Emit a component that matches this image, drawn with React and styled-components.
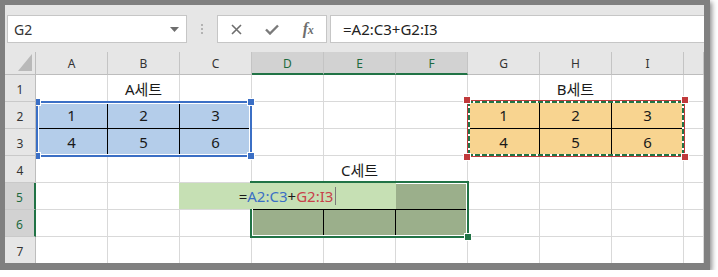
import React from "react";
import styled, { createGlobalStyle } from "styled-components";

const GlobalStyle = createGlobalStyle`
  html, body { margin: 0; padding: 0; background: #fff; }
  body { font-family: "Noto Sans", "Noto Sans CJK KR", sans-serif; }
  * { box-sizing: border-box; }
`;

const GREEN = "#217346";
const BLUE = "#3b6fc5";
const RED = "#c0393b";

const Frame = styled.div`
  width: 710px;
  height: 270px;
  padding: 5px 6px 7px 5px;
  background: #808080;
  box-shadow: 2px 2px 5px rgba(0, 0, 0, 0.45);
`;

const Window = styled.div`
  width: 699px;
  height: 258px;
  background: #fff;
  overflow: hidden;
  display: flex;
  flex-direction: column;
`;

const FormulaBar = styled.div`
  flex: 0 0 47px;
  background: #e6e6e6;
  display: flex;
  align-items: flex-start;
  padding: 10px 0 0 2px;
`;

const NameBox = styled.div`
  width: 180px;
  height: 28px;
  border: 1px solid #c6c6c6;
  background: #fff;
  display: flex;
  align-items: center;
  justify-content: space-between;
  padding: 0 7px 0 6px;
  font-size: 14px;
  color: #333;
`;

const Grip = styled.div`
  width: 30px;
  height: 28px;
  display: flex;
  flex-direction: column;
  align-items: center;
  justify-content: center;
  gap: 2px;
`;

const GripDot = styled.span`
  width: 2px;
  height: 2px;
  background: #b3b3b3;
`;

const FxBox = styled.div`
  width: 110px;
  height: 28px;
  border: 1px solid #c6c6c6;
  background: #fff;
  display: grid;
  grid-template-columns: repeat(3, 36px);
  align-items: center;
  justify-items: center;
`;

const FxText = styled.span`
  font-family: "Liberation Serif", serif;
  font-style: italic;
  font-weight: bold;
  font-size: 16px;
  line-height: 1;
  color: #6e6e6e;
  letter-spacing: -0.5px;
  & > small { font-size: 12px; }
`;

const FormulaInput = styled.div`
  flex: 1;
  margin-left: 3px;
  height: 28px;
  border: 1px solid #c6c6c6;
  border-right: none;
  background: #fff;
  display: flex;
  align-items: center;
  padding-left: 12px;
  font-size: 15px;
  color: #222;
`;

const Sheet = styled.div`
  flex: 1;
  display: grid;
  grid-template-columns: 31px 1fr;
  grid-template-rows: 23px 1fr;
  overflow: hidden;
`;

const Corner = styled.div`
  background: #e6e6e6;
  border-right: 1px solid #bdbdbd;
  border-bottom: 1px solid #bdbdbd;
  display: flex;
  align-items: flex-end;
  justify-content: flex-end;
  padding: 0 3px 3px 0;
`;

const ColHeaders = styled.div`
  display: grid;
  grid-template-columns: repeat(9, 72px) 1fr;
`;

const ColHead = styled.div`
  background: ${(p) => (p.$sel ? "#d2d2d2" : "#e6e6e6")};
  border-right: 1px solid #c4c4c4;
  border-bottom: ${(p) => (p.$sel ? `2px solid ${GREEN}` : "1px solid #bdbdbd")};
  display: flex;
  align-items: center;
  justify-content: center;
  font-size: 12px;
  color: ${(p) => (p.$sel ? "#1d6a3e" : "#333")};
  padding-top: ${(p) => (p.$sel ? "1px" : "0")};
`;

const RowHeaders = styled.div`
  display: grid;
  grid-template-rows: repeat(7, 27px);
`;

const RowHead = styled.div`
  background: ${(p) => (p.$sel ? "#d2d2d2" : "#e6e6e6")};
  border-bottom: 1px solid #c9c9c9;
  border-right: ${(p) => (p.$sel ? `2px solid ${GREEN}` : "1px solid #bdbdbd")};
  display: flex;
  align-items: center;
  justify-content: center;
  font-size: 12px;
  color: ${(p) => (p.$sel ? "#1d6a3e" : "#333")};
  padding-top: 2px;
`;

const Cells = styled.div`
  position: relative;
  overflow: hidden;
  display: grid;
  grid-template-columns: repeat(9, 72px) 1fr;
  grid-template-rows: repeat(7, 27px);
`;

const Cell = styled.div`
  background: ${(p) => p.$fill || "#fff"};
  border-right: 1px solid ${(p) => (p.$ruled ? "#000" : "#d9d9d9")};
  border-bottom: 1px solid ${(p) => (p.$ruled ? "#000" : "#d9d9d9")};
  display: flex;
  align-items: center;
  justify-content: center;
  font-size: 15px;
  color: #1a1a1a;
  white-space: nowrap;
`;

const Box = styled.div`
  position: absolute;
  left: ${(p) => p.$x}px;
  top: ${(p) => p.$y}px;
  width: ${(p) => p.$w}px;
  height: ${(p) => p.$h}px;
  pointer-events: none;
`;

const RefBox = styled(Box)`
  border: 2px solid ${BLUE};
  box-shadow: inset 0 0 0 1px #fff;
`;

const CopyBox = styled(Box)`
  border: 1px solid ${RED};
`;

const Dashes = styled.div`
  position: absolute;
  inset: 0;
  background:
    repeating-linear-gradient(90deg, ${GREEN} 0 5px, #fff 5px 7px) top left / 100% 2px no-repeat,
    repeating-linear-gradient(90deg, ${GREEN} 0 5px, #fff 5px 7px) bottom left / 100% 2px no-repeat,
    repeating-linear-gradient(180deg, ${GREEN} 0 5px, #fff 5px 7px) top left / 2px 100% no-repeat,
    repeating-linear-gradient(180deg, ${GREEN} 0 5px, #fff 5px 7px) top right / 2px 100% no-repeat;
`;

const SelBox = styled(Box)`
  border: 2px solid ${GREEN};
  box-shadow: inset 0 0 0 1px #fff;
`;

const Handle = styled.span`
  position: absolute;
  width: 6px;
  height: 6px;
  background: ${(p) => p.$color};
  box-shadow: 0 0 0 1px #fff;
  ${(p) => (p.$v === "t" ? "top: -4px;" : "bottom: -4px;")}
  ${(p) => (p.$h === "l" ? "left: -4px;" : "right: -4px;")}
`;

const EditBox = styled(Box)`
  background: #c6e0b4;
  z-index: 2;
  display: flex;
  align-items: center;
  justify-content: center;
  font-size: 15px;
  color: #1a1a1a;
  white-space: nowrap;
`;

const Ref = styled.span`
  color: ${(p) => p.$color};
`;

const Caret = styled.span`
  display: inline-block;
  width: 1px;
  height: 18px;
  background: #7a7a7a;
  margin-left: 2px;
`;

const COLS = ["A", "B", "C", "D", "E", "F", "G", "H", "I", ""];
const SEL_COLS = ["D", "E", "F"];
const BLUE_FILL = "#b4cdea";
const ORANGE_FILL = "#f8d490";
const DARK_FILL = "#9baf8b";

function buildRows() {
  const rows = Array.from({ length: 7 }, () => COLS.map(() => ({ text: "" })));
  rows[0][1].text = "A세트";
  rows[0][7].text = "B세트";
  rows[3][4].text = "C세트";
  [[1, 2, 3], [4, 5, 6]].forEach((vals, r) => {
    vals.forEach((v, c) => {
      rows[1 + r][c] = { text: String(v), fill: BLUE_FILL, ruled: true };
      rows[1 + r][6 + c] = { text: String(v), fill: ORANGE_FILL, ruled: true };
    });
  });
  [4, 5].forEach((r) => {
    [3, 4, 5].forEach((c) => {
      rows[r][c] = { text: "", fill: DARK_FILL, ruled: true };
    });
  });
  return rows;
}

const corners = [["t", "l"], ["t", "r"], ["b", "l"], ["b", "r"]];

export default function App() {
  const rows = buildRows();
  return (
    <>
      <GlobalStyle />
      <Frame>
        <Window>
          <FormulaBar>
            <NameBox>
              <span>G2</span>
              <svg width="9" height="5" viewBox="0 0 9 5">
                <path d="M0 0 H9 L4.5 5 Z" fill="#6e6e6e" />
              </svg>
            </NameBox>
            <Grip>
              <GripDot />
              <GripDot />
              <GripDot />
            </Grip>
            <FxBox>
              <svg width="11" height="11" viewBox="0 0 11 11">
                <path d="M1 1 L10 10 M10 1 L1 10" stroke="#6e6e6e" strokeWidth="1.6" fill="none" />
              </svg>
              <svg width="14" height="11" viewBox="0 0 14 11">
                <path d="M1 5.5 L5 9.5 L13 1.5" stroke="#7a7a7a" strokeWidth="2.4" fill="none" />
              </svg>
              <FxText>
                f<small>x</small>
              </FxText>
            </FxBox>
            <FormulaInput>=A2:C3+G2:I3</FormulaInput>
          </FormulaBar>
          <Sheet>
            <Corner>
              <svg width="14" height="17" viewBox="0 0 14 17">
                <path d="M14 0 V17 H0 Z" fill="#b9b9b9" />
              </svg>
            </Corner>
            <ColHeaders>
              {COLS.map((c, i) => (
                <ColHead key={i} $sel={SEL_COLS.includes(c)}>
                  {c}
                </ColHead>
              ))}
            </ColHeaders>
            <RowHeaders>
              {rows.map((_, i) => (
                <RowHead key={i} $sel={i === 4 || i === 5}>
                  {i + 1}
                </RowHead>
              ))}
            </RowHeaders>
            <Cells>
              {rows.map((row, r) =>
                row.map((cell, c) => (
                  <Cell key={`${r}-${c}`} $fill={cell.fill} $ruled={cell.ruled}>
                    {cell.text}
                  </Cell>
                ))
              )}
              <RefBox $x={0} $y={26} $w={216} $h={56}>
                {corners.map(([v, h]) => (
                  <Handle key={v + h} $v={v} $h={h} $color={BLUE} />
                ))}
              </RefBox>
              <CopyBox $x={431} $y={25} $w={218} $h={57}>
                <Dashes />
                {corners.map(([v, h]) => (
                  <Handle key={v + h} $v={v} $h={h} $color={RED} />
                ))}
              </CopyBox>
              <SelBox $x={214} $y={106} $w={219} $h={57}>
                <Handle $v="b" $h="r" $color={GREEN} />
              </SelBox>
              <EditBox $x={143} $y={108} $w={217} $h={26}>
                =<Ref $color={BLUE}>A2:C3</Ref>+<Ref $color="#c8414a">G2:I3</Ref>
                <Caret />
              </EditBox>
            </Cells>
          </Sheet>
        </Window>
      </Frame>
    </>
  );
}
